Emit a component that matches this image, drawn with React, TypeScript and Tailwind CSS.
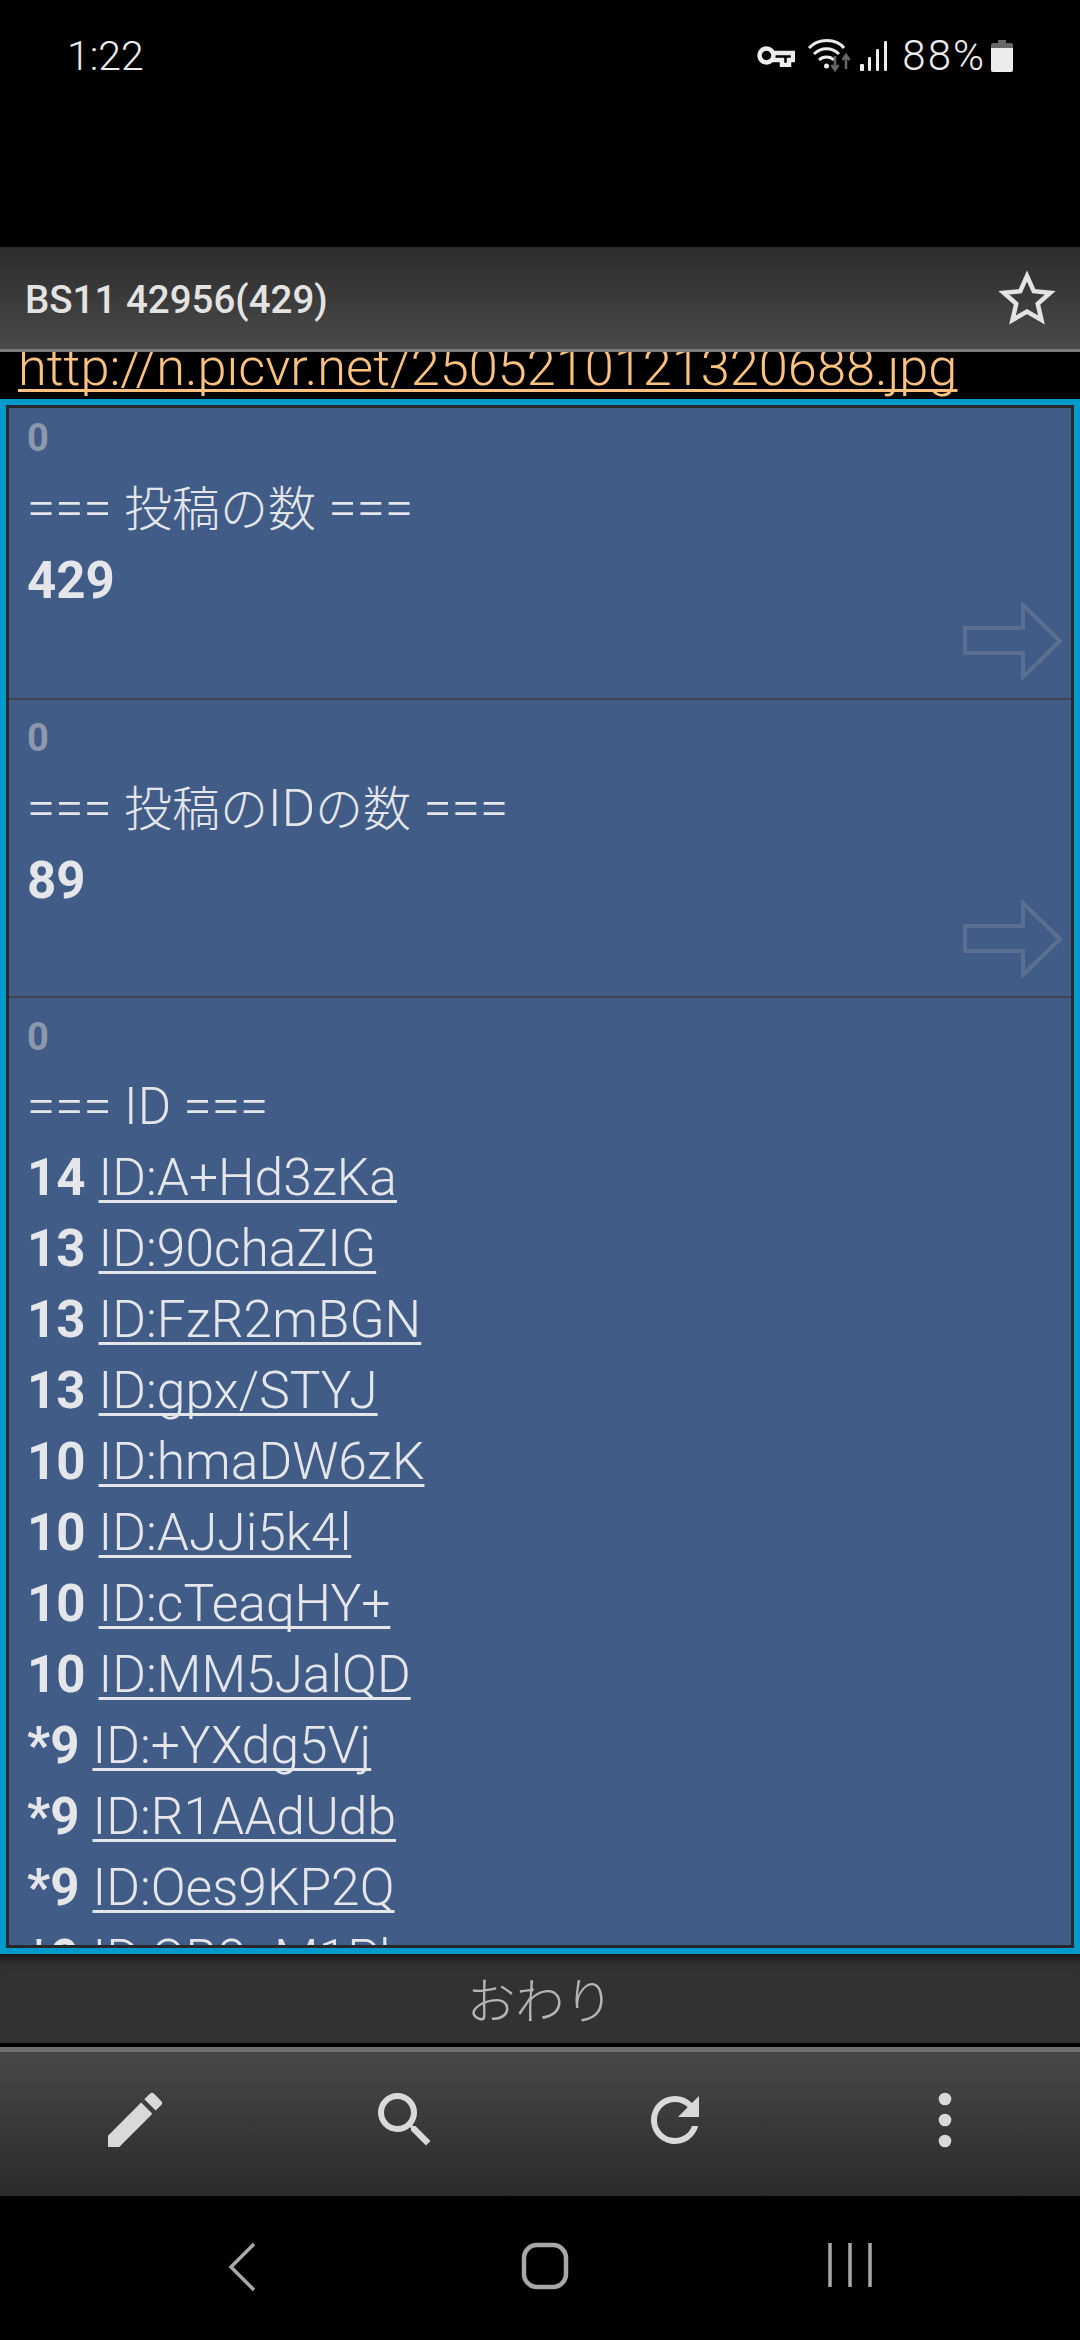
const ids: [string, string][] = [
  ["14", "ID:A+Hd3zKa"],
  ["13", "ID:90chaZIG"],
  ["13", "ID:FzR2mBGN"],
  ["13", "ID:gpx/STYJ"],
  ["10", "ID:hmaDW6zK"],
  ["10", "ID:AJJi5k4l"],
  ["10", "ID:cTeaqHY+"],
  ["10", "ID:MM5JalQD"],
  ["*9", "ID:+YXdg5Vj"],
  ["*9", "ID:R1AAdUdb"],
  ["*9", "ID:Oes9KP2Q"],
  ["*9", "ID:OB8nM1Pl"],
];

const font = "[font-family:Roboto,'Noto_Sans_CJK_JP',sans-serif]";

function StatusBar() {
  return (
    <div className="flex h-[247px] items-start justify-between bg-black pl-[67px] pr-[67px] pt-[32px] text-[#ececec]">
      <span className="text-[41px] font-light leading-[48px]">1:22</span>
      <div className="flex h-[48px] items-center">
        <svg width="38" height="22" viewBox="0 0 38 22" fill="none" stroke="#ececec" strokeWidth="4.500">
          <circle cx="9.500" cy="10.500" r="7" />
          <path d="M16 8h20v7h-4v5h-7v-5h-9" />
        </svg>
        <svg className="ml-[12px]" width="44" height="36" viewBox="0 0 44 36" fill="none">
          <path d="M2 10C11 0 29 0 37 10M7 16c7-7 18-7 25 0M12 22c4-4 11-4 15 0" stroke="#ececec" strokeWidth="3" />
          <circle cx="19.500" cy="28" r="2.500" fill="#ececec" />
          <path d="M28 18v13m-3.500-4 3.500 5 3.500-5" stroke="#666" strokeWidth="2.500" />
          <path d="M39 31V18m-3.500 4 3.500-5 3.500 5" stroke="#666" strokeWidth="2.500" />
        </svg>
        <svg className="ml-[9px]" width="28" height="32" viewBox="0 0 28 32" fill="#ececec">
          <rect x="0" y="24" width="4" height="7" rx="1" />
          <rect x="8" y="17" width="3" height="14" rx="1" />
          <rect x="16" y="9" width="3" height="22" rx="1" />
          <rect x="24" y="1" width="3" height="30" rx="1" />
        </svg>
        <span className="ml-[14px] text-[42px] font-light leading-[48px] tracking-[2px]">88%</span>
        <svg className="ml-[5px]" width="22" height="32" viewBox="0 0 22 32">
          <path d="M7 0h8v3h5a2 2 0 0 1 2 2v5H0V5a2 2 0 0 1 2-2h5z" fill="#666" />
          <path d="M0 8h22v22a2 2 0 0 1-2 2H2a2 2 0 0 1-2-2z" fill="#ececec" />
        </svg>
      </div>
    </div>
  );
}

function ArrowMark() {
  return (
    <svg
      className="absolute bottom-[18px] right-[8px]"
      width="100"
      height="78"
      viewBox="0 0 100 78"
      fill="none"
      stroke="#5b6f90"
      strokeWidth="4"
    >
      <path d="M2 26h58V3l37 36-37 36V51H2z" />
    </svg>
  );
}

function Post({ title, count, className }: { title: React.ReactNode; count: string; className: string }) {
  return (
    <div className={`relative border-b-2 border-[#40444c] ${className}`}>
      <div className="pl-[18px] text-[38px] font-bold leading-[44px] text-[#8c99ad]">0</div>
      <div className="mt-[13px] pl-[18px] text-[51px] font-light leading-[71px] text-[#e4e6e9]">{title}</div>
      <div className="pl-[18px] text-[51px] font-bold leading-[71px] text-[#e4e6e9]">{count}</div>
      <ArrowMark />
    </div>
  );
}

function Ja({ children }: { children: string }) {
  return <span className="text-[48px]">{children}</span>;
}

function IdRow({ n, id }: { n: string; id: string }) {
  return (
    <div className="flex gap-[13px] whitespace-nowrap pl-[18px] text-[51.500px] leading-[71px] text-[#e4e6e9]">
      <span className="text-[51px] font-bold">{n}</span>
      <span className="font-light underline decoration-[3px] underline-offset-[5px] [text-decoration-skip-ink:none]">{id}</span>
    </div>
  );
}

function Icons() {
  return (
    <div className="grid h-[144px] grid-cols-4 bg-gradient-to-b from-[#484848] to-[#2b2b2b] pb-[8px]">
      <div className="flex items-center justify-center">
        <svg width="72" height="72" viewBox="0 0 24 24" fill="#d9d9d9">
          <path d="M3 17.250V21h3.750L17.810 9.940l-3.750-3.750L3 17.250zM20.710 7.040a1 1 0 0 0 0-1.410l-2.340-2.340a1 1 0 0 0-1.410 0l-1.830 1.830 3.750 3.750 1.830-1.830z" />
        </svg>
      </div>
      <div className="flex items-center justify-center">
        <svg width="72" height="72" viewBox="0 0 24 24" fill="#d9d9d9">
          <path d="M15.500 14h-.79l-.28-.27A6.470 6.470 0 0 0 16 9.500 6.500 6.500 0 1 0 9.500 16c1.610 0 3.090-.59 4.230-1.570l.27.28v.79l5 4.990L20.490 19l-4.990-5zm-6 0C7.010 14 5 11.990 5 9.500S7.010 5 9.500 5 14 7.010 14 9.500 11.990 14 9.500 14z" />
        </svg>
      </div>
      <div className="flex items-center justify-center">
        <svg width="72" height="72" viewBox="0 0 24 24" fill="#d9d9d9">
          <path d="M17.650 6.350A7.950 7.950 0 0 0 12 4a8 8 0 1 0 7.730 10h-2.080A6 6 0 1 1 12 6c1.660 0 3.140.69 4.220 1.780L13 11h7V4l-2.350 2.350z" />
        </svg>
      </div>
      <div className="flex items-center justify-center">
        <svg width="72" height="72" viewBox="0 0 24 24" fill="#d9d9d9">
          <circle cx="12" cy="5" r="2.100" />
          <circle cx="12" cy="12" r="2.100" />
          <circle cx="12" cy="19" r="2.100" />
        </svg>
      </div>
    </div>
  );
}

function NavBar() {
  return (
    <div className="flex h-[144px] items-start bg-black pl-[227px] pt-[46px]">
      <svg width="30" height="50" viewBox="0 0 30 50" fill="none" stroke="#a8a8a8" strokeWidth="3.500">
        <path d="M27 2 4 25l23 23" />
      </svg>
      <svg width="48" height="48" viewBox="0 0 48 48" fill="none" stroke="#a8a8a8" strokeWidth="4.500" className="ml-[264px]">
        <rect x="3" y="3" width="42" height="42" rx="13" />
      </svg>
      <svg width="44" height="46" viewBox="0 0 44 46" fill="none" stroke="#a8a8a8" strokeWidth="3.500" className="ml-[259px]">
        <path d="M2 1v44M22 1v44M42 1v44" />
      </svg>
    </div>
  );
}

export default function App() {
  return (
    <div className={`flex h-[2340px] w-[1080px] flex-col overflow-hidden bg-black ${font}`}>
      <StatusBar />
      <div className="flex h-[105px] shrink-0 items-center justify-between border-b-[3px] border-[#7b7b7b] bg-gradient-to-b from-[#2c2c2c] to-[#4a4a4a] pl-[25px] pr-[22px]">
        <span className="pt-[3px] text-[38.500px] font-medium text-[#e3e3e3]">BS11 42956(429)</span>
        <svg width="62" height="60" viewBox="0 0 24 24" fill="none" stroke="#e3e3e3" strokeWidth="1.800">
          <path d="M12 3.200l2.700 6.100 6.600.6-5 4.400 1.500 6.500-5.800-3.400-5.800 3.400 1.500-6.500-5-4.400 6.600-.6z" />
        </svg>
      </div>
      <div className="flex h-[47px] shrink-0 items-end overflow-hidden bg-black pb-[2px] pl-[18px]">
        <span className="whitespace-nowrap text-[52.300px] font-light leading-[60px] text-[#fdc27f] underline decoration-[3px] underline-offset-[4px] [text-decoration-skip-ink:none]">
          http://n.picvr.net/2505210121320688.jpg
        </span>
      </div>
      <div className="h-[1555px] shrink-0 overflow-hidden border-[6px] border-[#0099cc] bg-[#425c88]">
        <div className="h-full overflow-hidden border-[3px] border-[#26282c]">
          <Post
            className="h-[292px] pt-[8px]"
            title={
              <>
                === <Ja>投稿の数</Ja> ===
              </>
            }
            count="429"
          />
          <Post
            className="h-[298px] pt-[16px]"
            title={
              <>
                === <Ja>投稿の</Ja>ID<Ja>の数</Ja> ===
              </>
            }
            count="89"
          />
          <div className="pl-[18px] pt-[17px] text-[38px] font-bold leading-[44px] text-[#8c99ad]">0</div>
          <div className="mt-[12px] pl-[18px] text-[51px] font-light leading-[71px] text-[#e4e6e9]">=== ID ===</div>
          {ids.map((row) => (
            <IdRow key={row[1]} n={row[0]} id={row[1]} />
          ))}
        </div>
      </div>
      <div className="flex h-[89px] shrink-0 items-center justify-center bg-[#323232] pt-[8px] text-[49px] font-light text-[#b4b4b4] shadow-[inset_0_14px_12px_-12px_rgba(0,0,0,0.8)]">
        おわり
      </div>
      <div className="h-[4px] shrink-0 bg-black" />
      <div className="h-[5px] shrink-0 bg-[#6e6e6e]" />
      <Icons />
      <NavBar />
    </div>
  );
}
